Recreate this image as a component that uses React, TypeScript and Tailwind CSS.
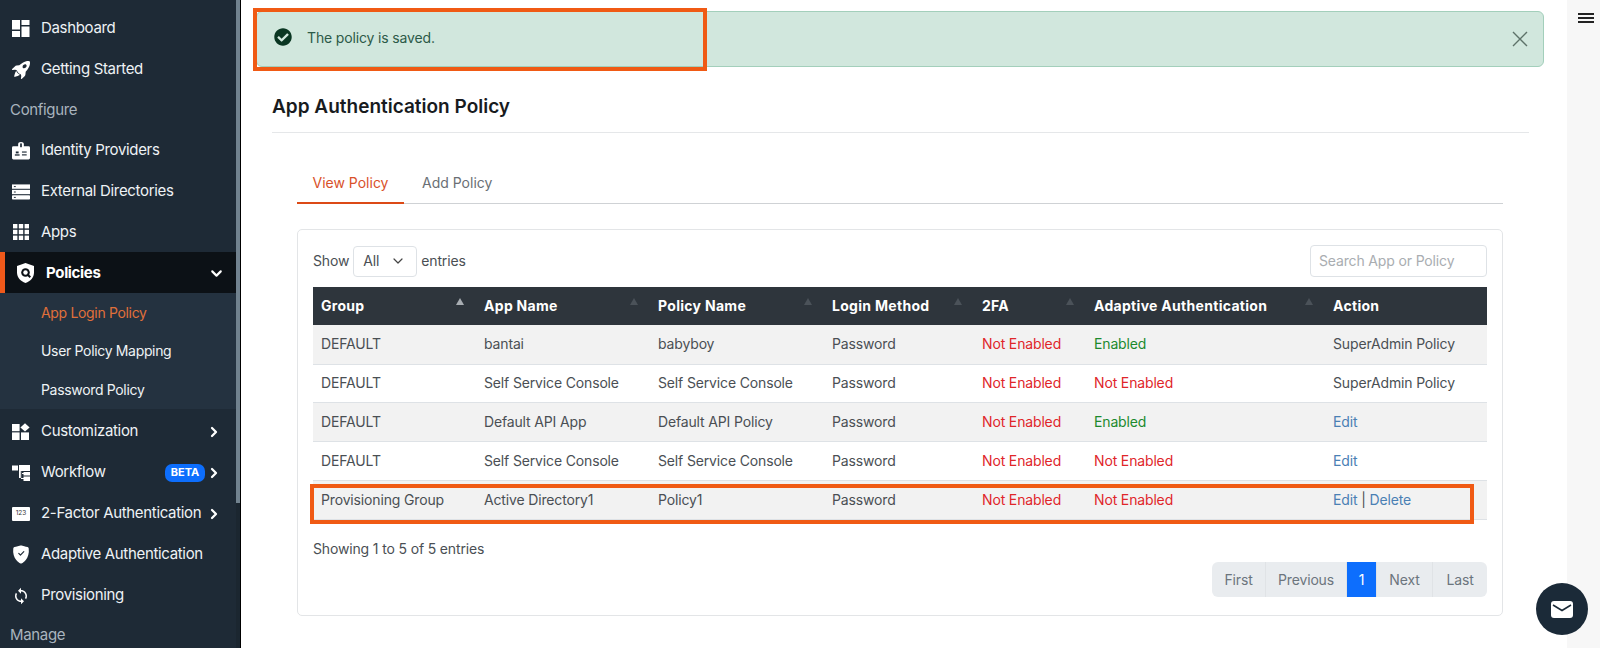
import React from "react";
import { FaCheckCircle } from "react-icons/fa";
import { MdSync } from "react-icons/md";
import { BsShieldFillCheck, BsRocketTakeoffFill } from "react-icons/bs";
import { ChevronDown, ChevronRight } from "lucide-react";

const Dash = () => (
  <svg width="18" height="17" viewBox="0 0 18 17" fill="#fff"><rect x="0" y="0" width="8" height="9.5" /><rect x="9.5" y="0" width="8" height="5" /><rect x="0" y="11" width="8" height="6" /><rect x="9.5" y="6.5" width="8" height="10.5" /></svg>
);
const Idp = () => (
  <svg width="18" height="18" viewBox="0 0 19 19"><path fill="#fff" d="M1.5 4.5h5V2.2a3 2.2 0 0 1 6 0v2.3h5a1.5 1.5 0 0 1 1.5 1.5v11a1.5 1.5 0 0 1-1.5 1.5h-16A1.5 1.5 0 0 1 0 17V6a1.5 1.5 0 0 1 1.5-1.5z" /><rect x="8.6" y="1.5" width="1.8" height="4" fill="#1e2a36" /><rect x="4" y="10" width="3" height="2" fill="#1e2a36" /><rect x="3" y="13" width="5" height="1.4" fill="#1e2a36" /><rect x="10.5" y="10" width="5" height="1.2" fill="#1e2a36" /><rect x="10.5" y="13" width="5" height="1.2" fill="#1e2a36" /></svg>
);
const Dirs = () => (
  <svg width="18" height="16" viewBox="0 0 19 16" fill="#fff"><rect y="0" width="19" height="4.6" /><rect y="5.7" width="19" height="4.6" /><rect y="11.4" width="19" height="4.6" rx="0.8" /><rect x="2" y="1.8" width="2" height="1" fill="#1e2a36" /><rect x="2" y="7.5" width="2" height="1" fill="#1e2a36" /><rect x="2" y="13.2" width="2" height="1" fill="#1e2a36" /></svg>
);
const Apps = () => (
  <svg width="16" height="16" viewBox="0 0 16 16" fill="#fff"><rect x="0" y="0" width="4.4" height="4.4" /><rect x="5.8" y="0" width="4.4" height="4.4" /><rect x="11.6" y="0" width="4.4" height="4.4" /><rect x="0" y="5.8" width="4.4" height="4.4" /><rect x="5.8" y="5.8" width="4.4" height="4.4" /><rect x="11.6" y="5.8" width="4.4" height="4.4" /><rect x="0" y="11.6" width="4.4" height="4.4" /><rect x="5.8" y="11.6" width="4.4" height="4.4" /><rect x="11.6" y="11.6" width="4.4" height="4.4" /></svg>
);
const PolicyIcon = () => (
  <svg width="17" height="20" viewBox="0 0 17 20"><path fill="#fff" d="M8.5 0 17 3v6.5c0 5-3.5 8.7-8.5 10.5C3.5 18.2 0 14.5 0 9.5V3z" /><circle cx="8.5" cy="9.5" r="4.3" fill="#0c1116" /><circle cx="8.5" cy="9.5" r="2.2" fill="#fff" /><path d="m10.5 11.5 2.8 2.8" stroke="#0c1116" strokeWidth="2" /></svg>
);
const Custom = () => (
  <svg width="18" height="17" viewBox="0 0 18 17" fill="#fff"><rect x="0" y="1" width="7.6" height="7.2" /><rect x="0" y="9.4" width="7.6" height="7.6" /><rect x="9" y="9.4" width="8" height="7.6" /><path d="M13 0.2 17.6 4.4 13 8.6 8.4 4.4z" /></svg>
);
const Flow = () => (
  <svg width="18" height="16" viewBox="0 0 18 16" fill="#fff"><rect x="0" y="0.5" width="6" height="5" /><rect x="7" y="0" width="11" height="6" /><rect x="7" y="2" width="3" height="11" /><rect x="11.5" y="7" width="6.5" height="3.5" /><rect x="11.5" y="11.5" width="6.5" height="4.5" /><path d="M9 8.5h3M9 13.5h3" stroke="#fff" strokeWidth="1" /><rect x="8.8" y="6" width="1" height="7" fill="#1e2a36" /></svg>
);

const Row = ({ icon, label, right, short }: { icon: React.ReactNode; label: string; right?: React.ReactNode; short?: boolean }) => (
  <div className={`${short ? "h-[40px]" : "h-[41px]"} flex items-center pl-[12px] pr-[17px] text-[#eef2f5]`}>
    <span className="w-[18px] flex justify-center shrink-0">{icon}</span>
    <span className="ml-[11px] whitespace-nowrap">{label}</span>
    <span className="ml-auto flex items-center">{right}</span>
  </div>
);
const Chev = () => <ChevronRight size={16} strokeWidth={3.4} color="#fff" className="mr-[-3px]" />;

const Sidebar = () => (
  <aside className="w-[236px] shrink-0 bg-[#1e2a36] text-[15px] tracking-[-0.33px] pt-[8px]">
    <Row icon={<Dash />} label="Dashboard" />
    <Row icon={<BsRocketTakeoffFill size={18} color="#fff" />} label="Getting Started" />
    <div className="h-[40px] flex items-center pl-[10px] text-[#a9b4be]">Configure</div>
    <Row icon={<Idp />} label="Identity Providers" />
    <Row icon={<Dirs />} label="External Directories" />
    <Row icon={<Apps />} label="Apps" short />
    <div className="h-[41px] flex items-center bg-[#0c1116] border-l-[5px] border-[#f0591a] pl-[12px] pr-[11px] pt-[1px] text-white font-bold">
      <PolicyIcon />
      <span className="ml-[12px]">Policies</span>
      <ChevronDown size={17} strokeWidth={3} className="ml-auto" />
    </div>
    <div className="bg-[#243240] h-[116px] mb-[2px] pl-[41px] text-[14px] flex flex-col text-[#eef2f5]">
      <div className="h-[38.5px] flex items-center text-[#e0703a]">App Login Policy</div>
      <div className="h-[38.5px] flex items-center">User Policy Mapping</div>
      <div className="h-[38.5px] flex items-center">Password Policy</div>
    </div>
    <Row icon={<Custom />} label="Customization" right={<Chev />} />
    <Row icon={<Flow />} label="Workflow" right={<><span className="bg-[#0d6efd] rounded-[7px] w-[40px] h-[18px] mr-[1px] flex items-center justify-center text-[11px] font-bold tracking-normal text-white">BETA</span><Chev /></>} />
    <Row icon={<span className="w-[18px] h-[14px] bg-white rounded-[1px] flex items-center justify-center text-[6.5px] text-[#333] tracking-normal">123</span>} label="2-Factor Authentication" right={<Chev />} />
    <Row icon={<BsShieldFillCheck size={19} color="#fff" />} label="Adaptive Authentication" />
    <Row icon={<MdSync size={22} color="#fff" />} label="Provisioning" />
    <div className="h-[38px] flex items-center pl-[10px] text-[#a9b4be]">Manage</div>
  </aside>
);

const Arrow = ({ on }: { on?: boolean }) => (
  <span className={`mt-[-7px] w-0 h-0 border-l-[4px] border-r-[4px] border-b-[7px] border-l-transparent border-r-transparent ${on ? "border-b-[#a8adb2]" : "border-b-[#4b5259]"}`} />
);

const cols = [
  { t: "Group", w: "w-[163px]" },
  { t: "App Name", w: "w-[174px]" },
  { t: "Policy Name", w: "w-[174px]" },
  { t: "Login Method", w: "w-[150px]" },
  { t: "2FA", w: "w-[112px]" },
  { t: "Adaptive Authentication", w: "w-[239px]" },
  { t: "Action", w: "w-[162px]" },
];

const R = () => <span className="text-[#e0262a]">Not Enabled</span>;
const G = () => <span className="text-[#1c8a2e]">Enabled</span>;
const L = ({ c }: { c: string }) => <a className="text-[#4a80b4]">{c}</a>;

const rows: React.ReactNode[][] = [
  ["DEFAULT", "bantai", "babyboy", "Password", <R />, <G />, "SuperAdmin Policy"],
  ["DEFAULT", "Self Service Console", "Self Service Console", "Password", <R />, <R />, "SuperAdmin Policy"],
  ["DEFAULT", "Default API App", "Default API Policy", "Password", <R />, <G />, <L c="Edit" />],
  ["DEFAULT", "Self Service Console", "Self Service Console", "Password", <R />, <R />, <L c="Edit" />],
  ["Provisioning Group", "Active Directory1", "Policy1", "Password", <R />, <R />, <><L c="Edit" /> | <L c="Delete" /></>],
];
const heights = ["h-[39px]", "h-[38px]", "h-[39px]", "h-[39px]", "h-[39px]"];

const pages = [
  { t: "First", w: "w-[54px]" },
  { t: "Previous", w: "w-[81px]" },
  { t: "1", w: "w-[30px]", on: true },
  { t: "Next", w: "w-[56px]" },
  { t: "Last", w: "w-[54px]" },
];

export default function App() {
  return (
    <div className="relative w-[1600px] h-[648px] overflow-hidden flex bg-white font-['Inter',sans-serif] text-[14px] text-[#4a4f54] tracking-[-0.15px]">
      <Sidebar />
      <div className="w-[4px] shrink-0 bg-[#1b2630] h-full flex flex-col">
        <div className="h-[503px] bg-[#71828f]" />
      </div>
      <div className="w-[1px] shrink-0 bg-black" />
      <main className="w-[1326px] shrink-0 pl-[15px] pr-[23px] pt-[11px]">
        <div className="h-[56px] bg-[#d1e7dd] border border-[#a3cfbb] rounded-[6px] flex items-center pl-[17px] pr-[15px] text-[#2c5a48]">
          <div className="flex items-center mb-[4px]">
            <FaCheckCircle size={18} color="#0a3622" />
            <span className="ml-[15px]">The policy is saved.</span>
          </div>
          <svg className="ml-auto" width="16" height="16" viewBox="0 0 16 16" stroke="#5d7269" strokeWidth="1.4"><path d="M1 1l14 14M15 1 1 15" /></svg>
        </div>
        <div className="ml-[16px] mr-[15px] h-[66px] border-b border-[#e5e7e9] flex items-center pt-[16px] text-[19px] font-semibold text-[#181b1e] tracking-[0px]">App Authentication Policy</div>
        <div className="ml-[41px] mr-[41px]">
          <div className="mt-[31px] h-[40px] border-b border-[#cfd2d5] flex text-[#6a6f74] tracking-[0px]">
            <div className="w-[107px] h-[40px] border-b-[2px] border-[#dc4a16] text-[#d9512a] flex items-center justify-center pb-[2px]">View Policy</div>
            <div className="ml-[18px] flex items-center pb-[2px]">Add Policy</div>
          </div>
          <section className="mt-[25px] h-[387px] border border-[#e3e5e7] rounded-[5px] px-[15px] pt-[15px]">
            <div className="h-[32px] flex items-center">
              <span className="mb-[2px]">Show</span>
              <div className="ml-[4px] w-[64px] h-[31px] border border-[#dee2e6] rounded-[4px] flex items-center pl-[9px] pb-[1px] gap-[11px]">All <ChevronDown size={16} strokeWidth={1.8} color="#444" /></div>
              <span className="ml-[4px] mb-[2px]">entries</span>
              <input readOnly placeholder="Search App or Policy" className="ml-auto w-[177px] h-[32px] border border-[#dee2e6] rounded-[4px] px-[8px] pb-[2px] outline-none placeholder:text-[#a9adb1]" />
            </div>
            <table className="mt-[10px] w-[1174px] table-fixed border-collapse">
              <thead>
                <tr className="h-[38px] bg-[#2e353c] text-white tracking-[0.3px]">
                  {cols.map((c) => (
                    <th key={c.t} className={`${c.w} px-[8px] pb-[2px] text-left font-bold`}>
                      <div className="flex items-center justify-between pr-[4px]">
                        {c.t}
                        {c.t !== "Action" && <Arrow on={c.t === "Group"} />}
                      </div>
                    </th>
                  ))}
                </tr>
              </thead>
              <tbody>
                {rows.map((r, i) => (
                  <tr key={i} className={`${heights[i]} border-b border-[#dee2e6] ${i % 2 === 0 ? "bg-[#f2f2f2]" : "bg-white"}`}>
                    {r.map((c, j) => (
                      <td key={j} className="px-[8px] pb-[1px] whitespace-nowrap">{c}</td>
                    ))}
                  </tr>
                ))}
              </tbody>
            </table>
            <div className="mt-[19px] leading-[20px]">Showing 1 to 5 of 5 entries</div>
            <div className="mt-[3px] flex justify-end">
              <div className="flex h-[35px] rounded-[6px] overflow-hidden bg-[#e9ecef] text-[#6c757d] divide-x divide-[#e0e3e6]">
                {pages.map((p) => (
                  <div key={p.t} className={`${p.w} flex items-center justify-center ${p.on ? "bg-[#0d6efd] text-white" : ""}`}>{p.t}</div>
                ))}
              </div>
            </div>
          </section>
        </div>
      </main>
      <div className="flex-1 bg-[#f7f7f7] pt-[13px] pl-[11px]">
        <div className="w-[16px] h-[10px] flex flex-col justify-between">
          <div className="h-[2px] bg-[#222]" />
          <div className="h-[2px] bg-[#222]" />
          <div className="h-[2px] bg-[#222]" />
        </div>
      </div>

      {/* annotation boxes painted over the screenshot */}
      <div className="absolute left-[253px] top-[8px] w-[454px] h-[63px] border-[4px] border-[#f05a14]" />
      <div className="absolute left-[310px] top-[484px] w-[1164px] h-[40px] border-[4px] border-[#f05a14]" />

      <button className="absolute left-[1536px] top-[583px] w-[52px] h-[52px] rounded-full bg-[#1b2a38] flex items-center justify-center">
        <svg width="22" height="17" viewBox="0 0 22 17"><rect width="22" height="17" rx="3" fill="#fff" /><path d="M2 4l9 5.5L20 4" fill="none" stroke="#1b2a38" strokeWidth="1.5" /></svg>
      </button>
    </div>
  );
}
